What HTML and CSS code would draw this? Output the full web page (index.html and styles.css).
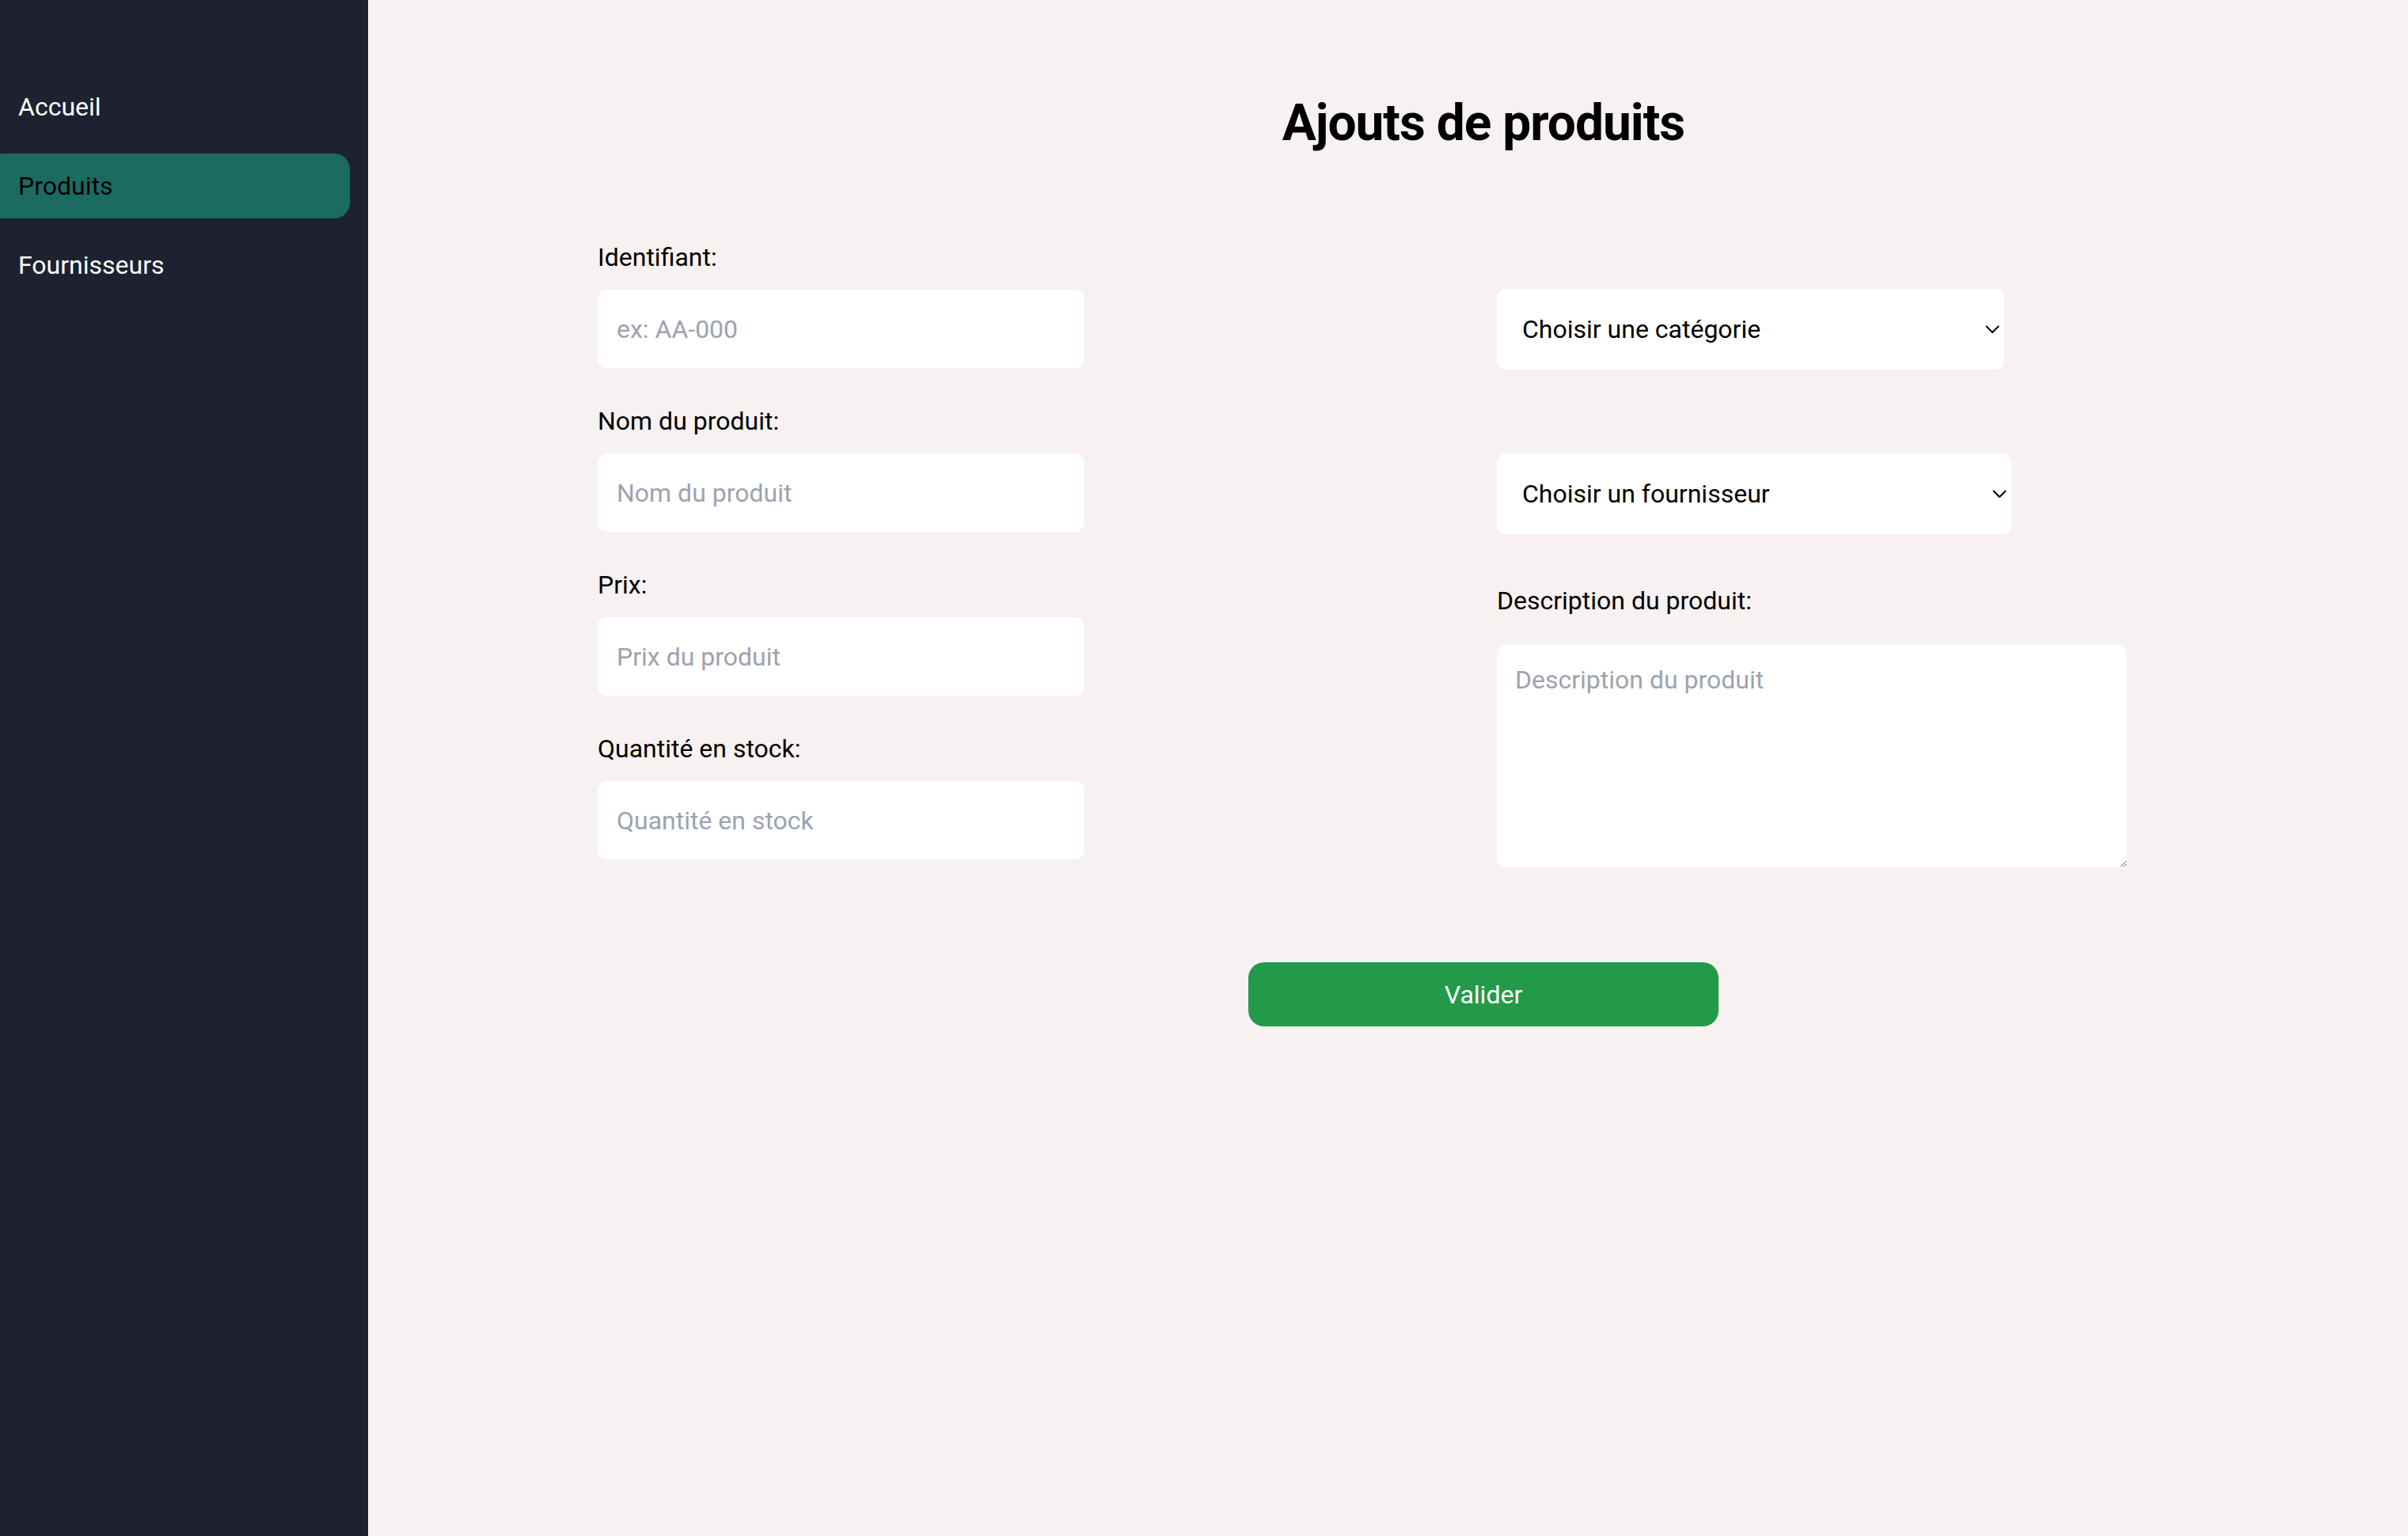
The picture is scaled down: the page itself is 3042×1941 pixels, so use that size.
FILE: index.html
```html
<!DOCTYPE html>
<html>
<head>
    <title>Ajouts de produits</title>
    <link rel="stylesheet" href="styles.css">
</head>
<body>
    <aside class="sidebar">
        <nav class="nav">
            <a class="nav-item" href="#">Accueil</a>
            <a class="nav-item active" href="#">Produits</a>
            <a class="nav-item" href="#">Fournisseurs</a>
        </nav>
    </aside>

    <main class="main">
        <h1 class="title">Ajouts de produits</h1>

        <form class="product-form">
            <div class="columns">
                <div class="col col-left">
                    <label class="field-label" for="ident">Identifiant:</label>
                    <input class="field" id="ident" type="text" placeholder="ex: AA-000">

                    <label class="field-label" for="nom">Nom du produit:</label>
                    <input class="field" id="nom" type="text" placeholder="Nom du produit">

                    <label class="field-label" for="prix">Prix:</label>
                    <input class="field" id="prix" type="text" placeholder="Prix du produit">

                    <label class="field-label" for="qte">Quantité en stock:</label>
                    <input class="field" id="qte" type="text" placeholder="Quantité en stock">
                </div>

                <div class="col col-right">
                    <div class="select-wrap select-cat">
                        <select class="field select">
                            <option>Choisir une catégorie</option>
                        </select>
                        <svg class="chevron" viewBox="0 0 18 10" width="18" height="10">
                            <path d="M1 1 L9 9 L17 1" fill="none" stroke="#000" stroke-width="2"/>
                        </svg>
                    </div>

                    <div class="select-wrap select-four">
                        <select class="field select">
                            <option>Choisir un fournisseur</option>
                        </select>
                        <svg class="chevron" viewBox="0 0 18 10" width="18" height="10">
                            <path d="M1 1 L9 9 L17 1" fill="none" stroke="#000" stroke-width="2"/>
                        </svg>
                    </div>

                    <label class="field-label desc-label" for="desc">Description du produit:</label>
                    <textarea class="field textarea" id="desc" placeholder="Description du produit"></textarea>
                </div>
            </div>

            <div class="actions">
                <button class="btn-submit" type="submit">Valider</button>
            </div>
        </form>
    </main>
</body>
</html>
```

FILE: styles.css
```css
* { box-sizing: border-box; }
body { margin: 0; display: flex; min-height: 100vh; font-family: Roboto, "Noto Sans", sans-serif; font-size: 32px; color: #000; background-color: #f7f1f1; }

/* sidebar */
.sidebar { width: 465px; flex-shrink: 0; background-color: #1e2230; overflow: hidden; }
.nav { display: flex; flex-direction: column; gap: 18px; padding-top: 94px; }
.nav-item { display: block; margin-right: 23px; margin-left: -16px; padding: 17px 23px 17px 39px; line-height: 48px; color: #fff; text-decoration: none; border-radius: 20px; }
.nav-item.active { background-color: #1b6b63; color: #000; }

/* main */
.main { flex: 1; padding-left: 241px; }
.title { margin: 113px 0 0; font-size: 64px; line-height: 86px; font-weight: 700; letter-spacing: -1px; text-align: center; }

.product-form { margin-top: 102px; }
.columns { display: grid; grid-template-columns: 1136px 1fr; padding-left: 49px; }
.col { display: flex; flex-direction: column; align-items: flex-start; }

.field-label { display: block; line-height: 48px; margin-bottom: 17px; }
.col-left .field-label + .field { margin-bottom: 43px; }

.field { font-family: inherit; font-size: 32px; color: #000; background-color: #fff; border: none; border-radius: 12px; outline: none; }
.field::placeholder { color: #9ca3af; }
input.field { width: 615px; height: 99px; padding: 0 24px; }

.select-wrap { position: relative; }
.select { -webkit-appearance: none; appearance: none; height: 102px; padding: 0 40px 0 32px; }
.select-cat { margin-top: 64px; }
.select-cat .select { width: 641px; }
.select-four { margin-top: 106px; }
.select-four .select { width: 650px; }
.chevron { position: absolute; right: 6px; top: 46px; }

.desc-label { margin-top: 60px; margin-bottom: 32px; }
.textarea { width: 796px; height: 281px; padding: 20px 23px; line-height: 48px; resize: vertical; }

.actions { padding-top: 87px; text-align: center; }
.btn-submit { width: 594px; height: 81px; font-family: inherit; font-size: 32px; color: #fff; background-color: #229a4a; border: none; border-radius: 20px; cursor: pointer; }
```
